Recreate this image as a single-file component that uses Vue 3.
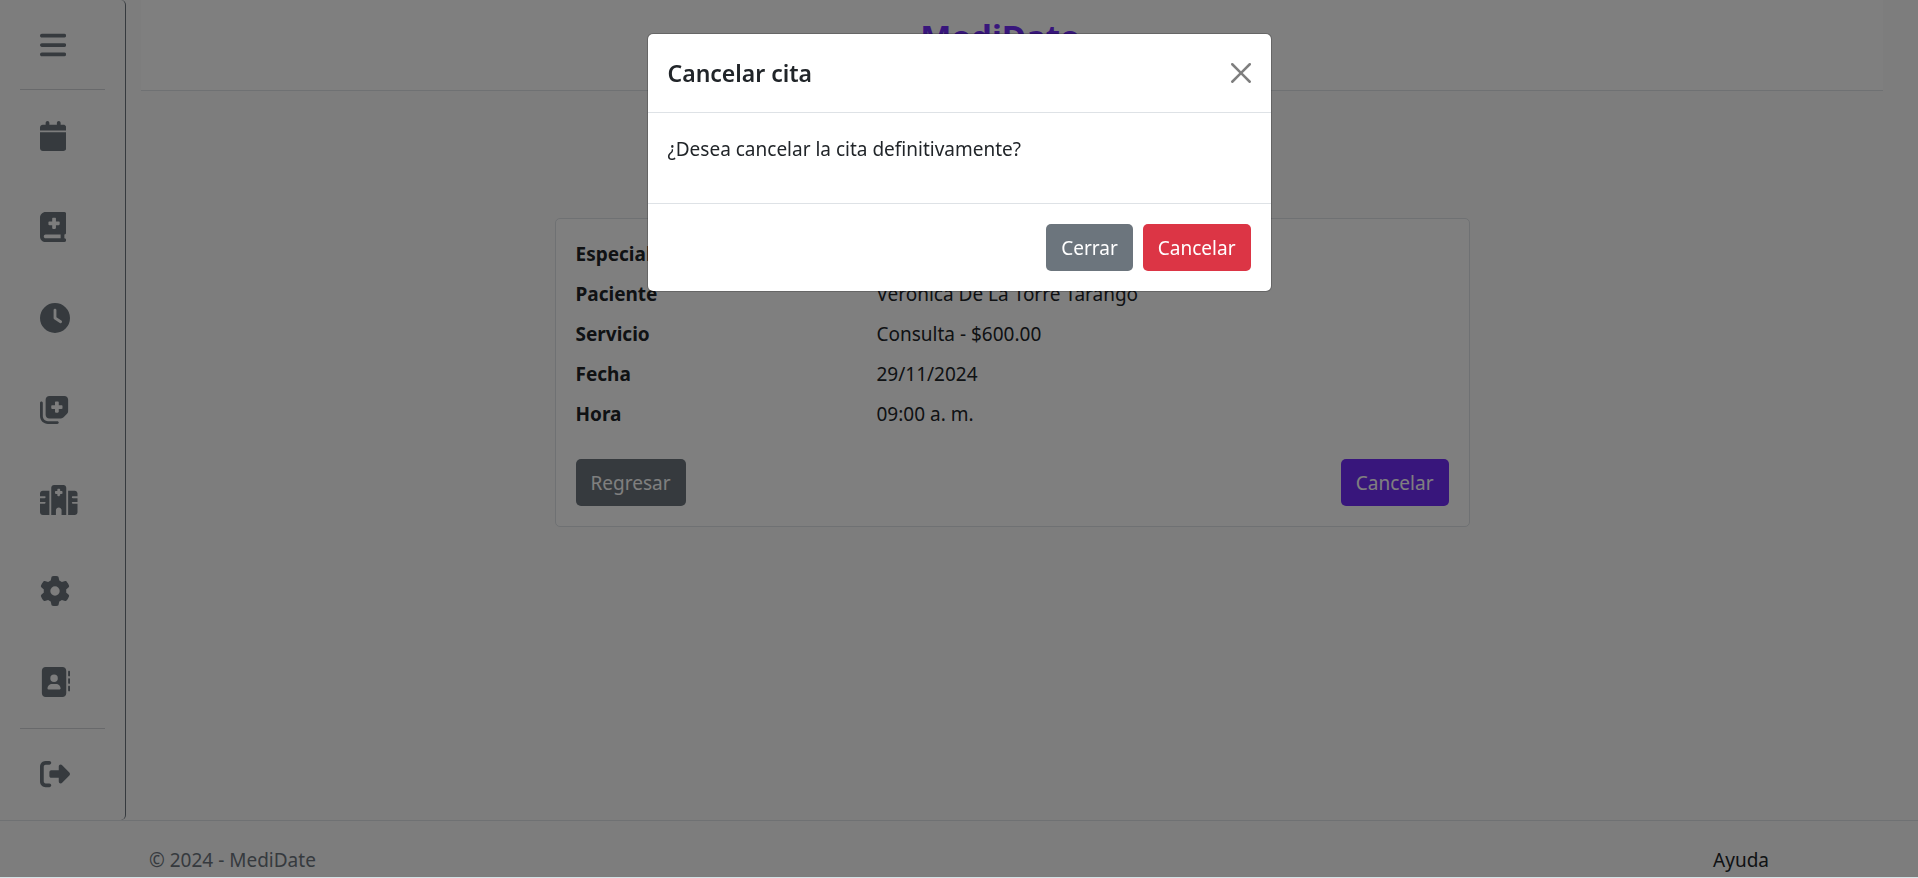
<script setup>
const items = [
  { name: 'Menú', w: 448, d: 'M0 96C0 78.3 14.3 64 32 64H416c17.7 0 32 14.3 32 32s-14.3 32-32 32H32C14.3 128 0 113.7 0 96zM0 256c0-17.7 14.3-32 32-32H416c17.7 0 32 14.3 32 32s-14.3 32-32 32H32c-17.7 0-32-14.3-32-32zM448 416c0 17.7-14.3 32-32 32H32c-17.7 0-32-14.3-32-32s14.3-32 32-32H416c17.7 0 32 14.3 32 32z' },
  { name: 'Citas', w: 448, d: 'M96 32V64H48C21.5 64 0 85.5 0 112v48H448V112c0-26.5-21.5-48-48-48H352V32c0-17.7-14.3-32-32-32s-32 14.3-32 32V64H160V32c0-17.7-14.3-32-32-32S96 14.3 96 32zM448 192H0V464c0 26.5 21.5 48 48 48H400c26.5 0 48-21.5 48-48V192z' },
  { name: 'Expedientes', w: 448, d: 'M0 96C0 43 43 0 96 0H384h32c17.7 0 32 14.3 32 32V352c0 17.7-14.3 32-32 32v64c17.7 0 32 14.3 32 32s-14.3 32-32 32H384 96c-53 0-96-43-96-96V96zM64 416c0 17.7 14.3 32 32 32H352V384H96c-17.7 0-32 14.3-32 32zM208 112v48H160c-8.8 0-16 7.2-16 16v32c0 8.8 7.2 16 16 16h48v48c0 8.8 7.2 16 16 16h32c8.8 0 16-7.2 16-16V224h48c8.8 0 16-7.2 16-16V176c0-8.8-7.2-16-16-16H272V112c0-8.8-7.2-16-16-16H224c-8.8 0-16 7.2-16 16z' },
  { name: 'Horarios', w: 512, d: 'M256 0a256 256 0 1 1 0 512A256 256 0 1 1 256 0zM232 120V256c0 8 4 15.5 10.7 20l96 64c11 7.4 25.9 4.4 33.3-6.7s4.4-25.9-6.7-33.3L280 243.2V120c0-13.3-10.7-24-24-24s-24 10.7-24 24z' },
  { name: 'Servicios', w: 512, d: 'M96 352V96c0-35.3 28.7-64 64-64H416c35.3 0 64 28.7 64 64V293.5c0 17-6.7 33.3-18.7 45.3l-58.5 58.5c-12 12-28.3 18.7-45.3 18.7H160c-35.3 0-64-28.7-64-64zM272 128c-8.8 0-16 7.2-16 16v48H208c-8.8 0-16 7.2-16 16v32c0 8.8 7.2 16 16 16h48v48c0 8.8 7.2 16 16 16h32c8.8 0 16-7.2 16-16V256h48c8.8 0 16-7.2 16-16V208c0-8.8-7.2-16-16-16H320V144c0-8.8-7.2-16-16-16H272zm24 336c13.3 0 24 10.7 24 24s-10.7 24-24 24H136C60.9 512 0 451.1 0 376V152c0-13.3 10.7-24 24-24s24 10.7 24 24V376c0 48.6 39.4 88 88 88H296z' },
  { name: 'Hospital', w: 640, d: 'M192 48c0-26.5 21.5-48 48-48H400c26.5 0 48 21.5 48 48V512H368V432c0-26.5-21.5-48-48-48s-48 21.5-48 48v80H192V48zM48 96H160V512H48c-26.5 0-48-21.5-48-48V320H80c8.8 0 16-7.2 16-16s-7.2-16-16-16H0V224H80c8.8 0 16-7.2 16-16s-7.2-16-16-16H0V144c0-26.5 21.5-48 48-48zm544 0c26.5 0 48 21.5 48 48v48H560c-8.8 0-16 7.2-16 16s7.2 16 16 16h80v64H560c-8.8 0-16 7.2-16 16s7.2 16 16 16h80V464c0 26.5-21.5 48-48 48H480V96H592zM312 64c-8.8 0-16 7.2-16 16v24H272c-8.8 0-16 7.2-16 16v16c0 8.8 7.2 16 16 16h24v24c0 8.8 7.2 16 16 16h16c8.8 0 16-7.2 16-16V152h24c8.8 0 16-7.2 16-16V120c0-8.8-7.2-16-16-16H344V80c0-8.8-7.2-16-16-16H312z' },
  { name: 'Configuración', w: 512, d: 'M495.9 166.6c3.2 8.7 .5 18.4-6.4 24.6l-43.3 39.4c1.1 8.3 1.7 16.8 1.7 25.4s-.6 17.1-1.7 25.4l43.3 39.4c6.9 6.2 9.6 15.9 6.4 24.6c-4.4 11.9-9.7 23.3-15.8 34.3l-4.7 8.1c-6.6 11-14 21.4-22.1 31.2c-5.9 7.2-15.7 9.6-24.5 6.8l-55.7-17.7c-13.4 10.3-28.2 18.9-44 25.4l-12.5 57.1c-2 9.1-9 16.3-18.2 17.8c-13.8 2.3-28 3.5-42.5 3.5s-28.7-1.2-42.5-3.5c-9.2-1.5-16.2-8.7-18.2-17.8l-12.5-57.1c-15.8-6.5-30.6-15.1-44-25.4L83.1 425.9c-8.8 2.8-18.6 .3-24.5-6.8c-8.1-9.8-15.5-20.2-22.1-31.2l-4.7-8.1c-6.1-11-11.4-22.4-15.8-34.3c-3.2-8.7-.5-18.4 6.4-24.6l43.3-39.4C64.6 273.1 64 264.6 64 256s.6-17.1 1.7-25.4L22.4 191.2c-6.9-6.2-9.6-15.9-6.4-24.6c4.4-11.9 9.7-23.3 15.8-34.3l4.7-8.1c6.6-11 14-21.4 22.1-31.2c5.9-7.2 15.7-9.6 24.5-6.8l55.7 17.7c13.4-10.3 28.2-18.9 44-25.4l12.5-57.1c2-9.1 9-16.3 18.2-17.8C227.3 1.2 241.5 0 256 0s28.7 1.2 42.5 3.5c9.2 1.5 16.2 8.7 18.2 17.8l12.5 57.1c15.8 6.5 30.6 15.1 44 25.4l55.7-17.7c8.8-2.8 18.6-.3 24.5 6.8c8.1 9.8 15.5 20.2 22.1 31.2l4.7 8.1c6.1 11 11.4 22.4 15.8 34.3zM256 336a80 80 0 1 0 0-160 80 80 0 1 0 0 160z' },
  { name: 'Contactos', w: 512, d: 'M96 0C60.7 0 32 28.7 32 64V448c0 35.3 28.7 64 64 64H384c35.3 0 64-28.7 64-64V64c0-35.3-28.7-64-64-64H96zM208 288h64c44.2 0 80 35.8 80 80c0 8.8-7.2 16-16 16H144c-8.8 0-16-7.2-16-16c0-44.2 35.8-80 80-80zm-32-96a64 64 0 1 1 128 0 64 64 0 1 1 -128 0zM512 80c0-8.8-7.2-16-16-16s-16 7.2-16 16v64c0 8.8 7.2 16 16 16s16-7.2 16-16V80zM496 192c-8.8 0-16 7.2-16 16v64c0 8.8 7.2 16 16 16s16-7.2 16-16V208c0-8.8-7.2-16-16-16zm16 144c0-8.8-7.2-16-16-16s-16 7.2-16 16v64c0 8.8 7.2 16 16 16s16-7.2 16-16V336z' },
  { name: 'Salir', w: 512, d: 'M377.9 105.9L500.7 228.7c7.2 7.2 11.3 17.1 11.3 27.3s-4.1 20.1-11.3 27.3L377.9 406.1c-6.4 6.4-15 9.9-24 9.9c-18.7 0-33.9-15.2-33.9-33.9V320H192c-17.7 0-32-14.3-32-32V224c0-17.7 14.3-32 32-32H320V129.9c0-18.7 15.2-33.9 33.9-33.9c9 0 17.6 3.6 24 9.9zM160 96H96c-17.7 0-32 14.3-32 32V384c0 17.7 14.3 32 32 32h64c17.7 0 32 14.3 32 32s-14.3 32-32 32H96c-53 0-96-43-96-96V128C0 75 43 32 96 32h64c17.7 0 32 14.3 32 32s-14.3 32-32 32z' }
]

const details = [
  { label: 'Especialidad', value: '' },
  { label: 'Paciente', value: 'Verónica De La Torre Tarango' },
  { label: 'Servicio', value: 'Consulta - $600.00' },
  { label: 'Fecha', value: '29/11/2024' },
  { label: 'Hora', value: '09:00 a. m.' }
]
</script>

<template>
  <div class="page">
    <div class="shell">
      <nav class="sidebar">
        <a v-for="item in items" :key="item.name" href="#" class="nav-item" :aria-label="item.name">
          <svg class="nav-icon" :viewBox="`0 0 ${item.w} 512`" aria-hidden="true"><path :d="item.d" /></svg>
        </a>
      </nav>
      <div class="content">
        <header class="topbar"><h1>MediDate</h1></header>
        <main class="card">
          <dl class="details">
            <template v-for="row in details" :key="row.label">
              <dt>{{ row.label }}</dt>
              <dd>{{ row.value }}</dd>
            </template>
          </dl>
          <div class="actions">
            <button type="button" class="btn secondary">Regresar</button>
            <button type="button" class="btn primary">Cancelar</button>
          </div>
        </main>
      </div>
    </div>
    <footer class="footer">
      <div class="footer-inner">
        <span>© 2024 - MediDate</span>
        <a href="#">Ayuda</a>
      </div>
    </footer>
  </div>

  <div class="overlay">
    <section class="modal" role="dialog" aria-modal="true" aria-labelledby="modal-title">
      <div class="modal-header">
        <h2 id="modal-title">Cancelar cita</h2>
        <button type="button" class="close" aria-label="Close">
          <svg viewBox="0 0 16 16" aria-hidden="true"><path d="M.293.293a1 1 0 0 1 1.414 0L8 6.586 14.293.293a1 1 0 1 1 1.414 1.414L9.414 8l6.293 6.293a1 1 0 0 1-1.414 1.414L8 9.414l-6.293 6.293a1 1 0 0 1-1.414-1.414L6.586 8 .293 1.707a1 1 0 0 1 0-1.414z" /></svg>
        </button>
      </div>
      <div class="modal-body"><p>¿Desea cancelar la cita definitivamente?</p></div>
      <div class="modal-footer">
        <button type="button" class="btn secondary">Cerrar</button>
        <button type="button" class="btn danger">Cancelar</button>
      </div>
    </section>
  </div>
</template>

<style>
body {
  margin: 0;
  background: #fafafa;
}
</style>

<style scoped>
.page,
.overlay {
  font-family: "Segoe UI", "Noto Sans", sans-serif;
  font-size: 19px;
  line-height: 30px;
  color: #212529;
}
.page {
  display: flex;
  flex-direction: column;
  min-height: 100vh;
}
.shell {
  flex: 1;
  display: flex;
}
.sidebar {
  display: flex;
  flex-direction: column;
  box-sizing: border-box;
  width: 126px;
  padding: 0 20px;
  border-right: 1px solid #6c757d;
  border-radius: 5px;
}
.nav-item {
  flex: 1;
  display: flex;
  align-items: center;
  padding-left: 20px;
  box-sizing: border-box;
}
.nav-item:first-child {
  flex: none;
  height: 90px;
  border-bottom: 1px solid #d0d3d6;
}
.nav-item:last-child {
  border-top: 1px solid #d0d3d6;
}
.nav-icon {
  display: block;
  height: 30px;
  fill: #6c757d;
}
.content {
  flex: 1;
  padding: 0 35px 0 15px;
}
.topbar {
  background: #fff;
  border-bottom: 1px solid #dee2e6;
  padding: 12px 24px 28px 0;
  text-align: center;
}
h1 {
  margin: 0;
  font-size: 33px;
  line-height: 50px;
  font-weight: 700;
  color: #712cf9;
}
.card {
  box-sizing: border-box;
  width: 53%;
  max-width: 915px;
  margin: 127px auto 0;
  padding: 20px;
  background: #fff;
  border: 1px solid #dee2e6;
  border-radius: 5px;
}
.details {
  display: grid;
  grid-template-columns: 1fr 2fr;
  row-gap: 10px;
  margin: 0 -15px 30px;
}
.details dt,
.details dd {
  margin: 0;
  padding: 0 15px;
}
.details dt {
  font-weight: 700;
}
.actions {
  display: flex;
  justify-content: space-between;
}
.btn {
  padding: 9px 14px 7px;
  border: 1px solid transparent;
  border-radius: 5px;
  font: inherit;
  line-height: 29px;
  color: #fff;
}
.secondary {
  background: #6c757d;
}
.primary {
  background: #712cf9;
}
.danger {
  background: #dc3545;
}
.footer {
  border-top: 1px solid #dee2e6;
  padding: 24px 0 3px;
}
.footer-inner {
  display: flex;
  justify-content: space-between;
  max-width: 1620px;
  margin: 0 auto;
  color: #6c757d;
}
.footer a {
  color: #212529;
  text-decoration: none;
}
.overlay {
  position: fixed;
  inset: 0;
  padding-top: 33px;
  background: rgba(0, 0, 0, 0.5);
  border-bottom: 1px solid #d5e3e6;
}
.modal {
  box-sizing: border-box;
  max-width: 625px;
  margin: 0 auto;
  background: #fff;
  background-clip: padding-box;
  border: 1px solid rgba(0, 0, 0, 0.2);
  border-radius: 6px;
}
.modal-header {
  display: flex;
  align-items: center;
  justify-content: space-between;
  padding: 20px;
  border-bottom: 1px solid #dee2e6;
}
h2 {
  margin: 0;
  font-size: 23px;
  line-height: 38px;
  font-weight: 600;
}
.close {
  padding: 0;
  border: 0;
  background: none;
  opacity: 0.5;
}
.close svg {
  display: block;
  width: 20px;
  height: 20px;
}
.modal-body {
  padding: 21px 20px 19px;
}
.modal-body p {
  margin: 0 0 20px;
}
.modal-footer {
  display: flex;
  justify-content: flex-end;
  gap: 10px;
  padding: 20px;
  border-top: 1px solid #dee2e6;
}
</style>
